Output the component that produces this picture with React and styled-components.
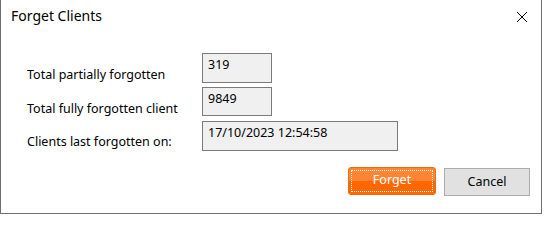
import React from "react";
import styled, { createGlobalStyle } from "styled-components";

const GlobalStyle = createGlobalStyle`
  html, body {
    margin: 0;
    padding: 0;
    background: #ffffff;
  }
  body {
    font-family: "Noto Sans", "Open Sans", sans-serif;
    color: #000000;
  }
`;

const Window = styled.div`
  width: 542px;
  height: 214px;
  box-sizing: border-box;
  border: 1px solid #707070;
  border-top: none;
  background: #ffffff;
  display: flex;
  flex-direction: column;
`;

const TitleBar = styled.div`
  height: 33px;
  display: flex;
  align-items: center;
  justify-content: space-between;
  padding: 0 12px 0 10px;
`;

const Title = styled.span`
  font-size: 14px;
  line-height: 20px;
  margin-top: -1px;
`;

const CloseButton = styled.button`
  background: none;
  border: none;
  padding: 0;
  width: 14px;
  height: 14px;
  display: flex;
  align-items: center;
  justify-content: center;
  cursor: pointer;
`;

const Form = styled.div`
  display: grid;
  grid-template-columns: 175px auto;
  row-gap: 4px;
  padding: 20px 0 0 26px;
`;

const Label = styled.div`
  font-size: 12.5px;
  line-height: 16px;
  padding-top: ${p => p.$offset}px;
  white-space: nowrap;
`;

const ValueBox = styled.div`
  width: ${p => p.$width}px;
  height: ${p => p.$height}px;
  box-sizing: border-box;
  border: 1px solid #7a7a7a;
  background: #f0f0f0;
  font-size: 12.5px;
  line-height: 16px;
  padding: 3px 5px;
`;

const ButtonRow = styled.div`
  display: flex;
  justify-content: flex-end;
  align-items: flex-start;
  gap: 8px;
  padding: 16px 11px 0 0;
`;

const PrimaryButton = styled.button`
  position: relative;
  width: 88px;
  height: 28px;
  box-sizing: border-box;
  border: 1px solid #f06a12;
  border-radius: 3px;
  background: linear-gradient(to bottom, #ff8434 0%, #ff8434 50%, #ff6800 50%, #ff6800 100%);
  color: #ffffff;
  font-family: "Noto Sans", "Open Sans", sans-serif;
  font-size: 12.5px;
  line-height: 16px;
  padding: 0 0 3px;
  cursor: pointer;

  &::after {
    content: "";
    position: absolute;
    inset: 2px;
    border: 1px dotted #ffffff;
    border-radius: 1px;
  }
`;

const SecondaryButton = styled.button`
  width: 86px;
  height: 28px;
  margin-top: 1px;
  box-sizing: border-box;
  border: 1px solid #adadad;
  background: #e1e1e1;
  color: #000000;
  font-family: "Noto Sans", "Open Sans", sans-serif;
  font-size: 12.5px;
  line-height: 16px;
  padding: 0;
  cursor: pointer;
`;

const rows = [
  { label: "Total partially forgotten", value: "319", width: 70, height: 30, offset: 14 },
  { label: "Total fully forgotten client", value: "9849", width: 70, height: 29, offset: 14 },
  { label: "Clients last forgotten on:", value: "17/10/2023 12:54:58", width: 196, height: 30, offset: 13 },
];

const App = () => {
  return (
    <>
      <GlobalStyle />
      <Window>
        <TitleBar>
          <Title>Forget Clients</Title>
          <CloseButton aria-label="Close">
            <svg width="12" height="12" viewBox="0 0 12 12">
              <path d="M1 1 L11 11 M11 1 L1 11" stroke="#000" strokeWidth="1" fill="none" />
            </svg>
          </CloseButton>
        </TitleBar>
        <Form>
          {rows.map(r => (
            <React.Fragment key={r.label}>
              <Label $offset={r.offset}>{r.label}</Label>
              <ValueBox $width={r.width} $height={r.height}>
                {r.value}
              </ValueBox>
            </React.Fragment>
          ))}
        </Form>
        <ButtonRow>
          <PrimaryButton>Forget</PrimaryButton>
          <SecondaryButton>Cancel</SecondaryButton>
        </ButtonRow>
      </Window>
    </>
  );
};

export default App;
